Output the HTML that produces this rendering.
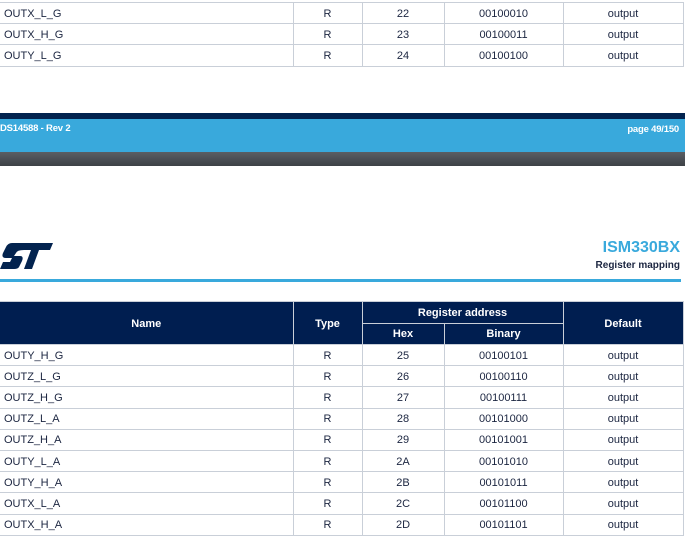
<!DOCTYPE html>
<html><head><meta charset="utf-8"><style>
*{margin:0;padding:0;box-sizing:border-box}
body{width:685px;height:536px;overflow:hidden;background:#fff;font-family:"Liberation Sans",Arial,sans-serif;position:relative;color:#1b2540}
table{position:absolute;left:0;border-collapse:collapse;table-layout:fixed;width:683px;font-size:11px}
td,th{border:1.5px solid #c9cfd8;height:21.2px;text-align:center;padding:1px 0 0 0}
td:first-child{text-align:left;padding-left:4px;border-left:none}
th{background:#001e50;color:#fff;font-weight:bold;border-color:#c9cfd8;height:21.5px}
.abs{position:absolute}
</style></head><body>
<table style="top:2px">
<colgroup><col style="width:293px"><col style="width:69px"><col style="width:82px"><col style="width:119px"><col style="width:120px"></colgroup>
<tr><td>OUTX_L_G</td><td>R</td><td>22</td><td>00100010</td><td>output</td></tr>
<tr><td>OUTX_H_G</td><td>R</td><td>23</td><td>00100011</td><td>output</td></tr>
<tr><td>OUTY_L_G</td><td>R</td><td>24</td><td>00100100</td><td>output</td></tr>
</table>
<div class="abs" style="top:113px;left:0;width:685px;height:6px;background:#03234f"></div>
<div class="abs" style="top:119px;left:0;width:685px;height:33px;background:#39a9dc"></div>
<div class="abs" style="top:152px;left:0;width:685px;height:14px;background:linear-gradient(#5a5e63,#3d4146)"></div>
<div class="abs" style="top:123px;left:0;font-size:9.5px;font-weight:bold;color:#fff;letter-spacing:-0.2px">DS14588 - Rev 2</div>
<div class="abs" style="top:124px;right:6px;font-size:9.5px;font-weight:bold;color:#fff;letter-spacing:-0.2px">page 49/150</div>
<svg class="abs" style="left:0;top:243px" width="56" height="27" viewBox="0 0 56 27">
<path fill="#03234f" d="M12 0H53L50 7H39L32 26H24L31 7H28L24 7Q17 7 16 10L14 13H20Q24 13 22 18L19 24Q18 26 14 26H0L3 19H10L12 15H6Q1 15 3 10L6 4Q8 0 12 0Z"/>
</svg>
<div class="abs" style="top:239px;right:5px;font-size:16px;font-weight:bold;color:#39a9dc">ISM330BX</div>
<div class="abs" style="top:260px;right:5px;font-size:10px;font-weight:bold;color:#1b2540">Register mapping</div>
<div class="abs" style="top:279px;left:0;width:681px;height:3px;background:#39a9dc"></div>
<table style="top:301px">
<colgroup><col style="width:293px"><col style="width:69px"><col style="width:82px"><col style="width:119px"><col style="width:120px"></colgroup>
<tr><th rowspan="2" style="border-left:none">Name</th><th rowspan="2">Type</th><th colspan="2">Register address</th><th rowspan="2">Default</th></tr>
<tr><th>Hex</th><th>Binary</th></tr>
<tr><td>OUTY_H_G</td><td>R</td><td>25</td><td>00100101</td><td>output</td></tr>
<tr><td>OUTZ_L_G</td><td>R</td><td>26</td><td>00100110</td><td>output</td></tr>
<tr><td>OUTZ_H_G</td><td>R</td><td>27</td><td>00100111</td><td>output</td></tr>
<tr><td>OUTZ_L_A</td><td>R</td><td>28</td><td>00101000</td><td>output</td></tr>
<tr><td>OUTZ_H_A</td><td>R</td><td>29</td><td>00101001</td><td>output</td></tr>
<tr><td>OUTY_L_A</td><td>R</td><td>2A</td><td>00101010</td><td>output</td></tr>
<tr><td>OUTY_H_A</td><td>R</td><td>2B</td><td>00101011</td><td>output</td></tr>
<tr><td>OUTX_L_A</td><td>R</td><td>2C</td><td>00101100</td><td>output</td></tr>
<tr><td>OUTX_H_A</td><td>R</td><td>2D</td><td>00101101</td><td>output</td></tr>
</table>
</body></html>
